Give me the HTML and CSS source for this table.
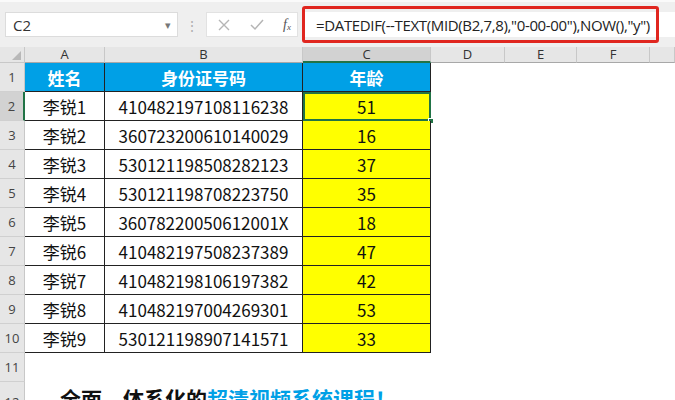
FILE: index.html
```html
<!DOCTYPE html>
<html lang="zh">
<head>
<meta charset="utf-8">
<link rel="stylesheet" href="styles.css">
</head>
<body>
<div class="toolbar">
  <div class="namebox"><span>C2</span><span class="caret">&#9662;</span></div>
  <div class="grip">&#8942;</div>
  <div class="btns">
    <svg width="14" height="14" viewBox="0 0 14 14"><path d="M2 2 L12 12 M12 2 L2 12" stroke="#b5b5b5" stroke-width="1.4" fill="none"/></svg>
    <svg width="16" height="14" viewBox="0 0 16 14"><path d="M2 7 L6 11 L14 2" stroke="#b5b5b5" stroke-width="1.5" fill="none"/></svg>
    <span class="fx">f<sub>x</sub></span>
  </div>
  <div class="field">
    <span class="formula">=DATEDIF(--TEXT(MID(B2,7,8),"0-00-00"),NOW(),"y")</span>
    <div class="annot"></div>
  </div>
</div>
<div class="sheet">
  <div class="corner"><span class="tri"></span></div>
  <div class="ch">A</div><div class="ch">B</div><div class="ch sel">C</div><div class="ch">D</div><div class="ch">E</div><div class="ch">F</div><div class="ch"></div>

  <div class="rh">1</div>
  <div class="c t head">姓名</div><div class="c t head">身份证号码</div><div class="c t head">年龄</div><div class="c"></div><div class="c"></div><div class="c"></div><div class="c"></div>

  <div class="rh sel">2</div>
  <div class="c t">李锐1</div><div class="c t">410482197108116238</div><div class="c t y active">51<span class="handle"></span></div><div class="c"></div><div class="c"></div><div class="c"></div><div class="c"></div>

  <div class="rh">3</div>
  <div class="c t">李锐2</div><div class="c t">360723200610140029</div><div class="c t y">16</div><div class="c"></div><div class="c"></div><div class="c"></div><div class="c"></div>

  <div class="rh">4</div>
  <div class="c t">李锐3</div><div class="c t">530121198508282123</div><div class="c t y">37</div><div class="c"></div><div class="c"></div><div class="c"></div><div class="c"></div>

  <div class="rh">5</div>
  <div class="c t">李锐4</div><div class="c t">530121198708223750</div><div class="c t y">35</div><div class="c"></div><div class="c"></div><div class="c"></div><div class="c"></div>

  <div class="rh">6</div>
  <div class="c t">李锐5</div><div class="c t">36078220050612001X</div><div class="c t y">18</div><div class="c"></div><div class="c"></div><div class="c"></div><div class="c"></div>

  <div class="rh">7</div>
  <div class="c t">李锐6</div><div class="c t">410482197508237389</div><div class="c t y">47</div><div class="c"></div><div class="c"></div><div class="c"></div><div class="c"></div>

  <div class="rh">8</div>
  <div class="c t">李锐7</div><div class="c t">410482198106197382</div><div class="c t y">42</div><div class="c"></div><div class="c"></div><div class="c"></div><div class="c"></div>

  <div class="rh">9</div>
  <div class="c t">李锐8</div><div class="c t">410482197004269301</div><div class="c t y">53</div><div class="c"></div><div class="c"></div><div class="c"></div><div class="c"></div>

  <div class="rh">10</div>
  <div class="c t">李锐9</div><div class="c t">530121198907141571</div><div class="c t y">33</div><div class="c"></div><div class="c"></div><div class="c"></div><div class="c"></div>

  <div class="rh">11</div>
  <div class="c"></div><div class="c"></div><div class="c"></div><div class="c"></div><div class="c"></div><div class="c"></div><div class="c"></div>

  <div class="rh">12</div>
  <div class="banner">全面、体系化的<span class="blue">超清视频系统课程！</span></div>
</div>
</body>
</html>
```
FILE: styles.css
```css
* { box-sizing: border-box; }
html, body { margin: 0; padding: 0; }
body {
  width: 675px;
  height: 400px;
  overflow: hidden;
  background: #fff;
  font-family: "Noto Sans CJK SC", "Noto Sans", sans-serif;
  color: #111;
}
.toolbar {
  height: 47px;
  background: #efefef;
  border-top: 2px solid #fafafa;
  display: flex;
  align-items: center;
  padding-left: 5px;
}
.namebox {
  width: 173px;
  height: 25px;
  background: #fff;
  border: 1px solid #dcdcdc;
  display: flex;
  align-items: center;
  justify-content: space-between;
  padding: 0 6px 0 7px;
  font-family: "Open Sans", "Noto Sans", sans-serif;
  font-size: 15px;
  color: #333;
}
.caret { font-size: 11px; color: #777; }
.grip {
  width: 28px;
  text-align: center;
  color: #b0b0b0;
  font-size: 14px;
}
.btns {
  width: 92px;
  height: 25px;
  background: #fff;
  border: 1px solid #e2e2e2;
  display: flex;
  align-items: center;
  justify-content: space-between;
  padding: 0 6px 0 10px;
}
.fx {
  font-family: "Liberation Serif", serif;
  font-style: italic;
  font-size: 14px;
  color: #555;
}
.fx sub { font-size: 9px; vertical-align: -1px; }
.field {
  flex: 1;
  height: 25px;
  margin-left: 5px;
  background: #fff;
  position: relative;
  display: flex;
  align-items: center;
  padding-left: 13px;
}
.formula {
  font-family: "Open Sans", "Noto Sans", sans-serif;
  font-size: 15px;
  color: #222;
  letter-spacing: -0.35px;
  white-space: nowrap;
}
.annot {
  position: absolute;
  left: -1px;
  top: -6px;
  width: 357px;
  height: 37px;
  border: 3px solid #e0261f;
  border-radius: 3px;
}
.sheet {
  display: grid;
  grid-template-columns: 25px 80px 198px 128px 74px 72px 73px 1fr;
  grid-template-rows: 16px repeat(11, 29px) 40px;
}
.corner {
  background: #e6e6e6;
  border-right: 1px solid #c8c8c8;
  border-bottom: 1px solid #c8c8c8;
  position: relative;
}
.tri {
  position: absolute;
  right: 3px;
  bottom: 2px;
  width: 0; height: 0;
  border-left: 9px solid transparent;
  border-bottom: 9px solid #b8b8b8;
}
.ch {
  background: #e6e6e6;
  border-right: 1px solid #c8c8c8;
  border-bottom: 1px solid #a8a8a8;
  font-family: "Open Sans", "Noto Sans", sans-serif;
  font-size: 13px;
  color: #333;
  display: flex;
  align-items: center;
  justify-content: center;
  line-height: 1;
}
.ch.sel { background: #d2d2d2; border-bottom: 2px solid #217346; }
.rh {
  background: #e6e6e6;
  border-right: 1px solid #c8c8c8;
  border-bottom: 1px solid #d0d0d0;
  font-family: "Open Sans", "Noto Sans", sans-serif;
  font-size: 13px;
  color: #444;
  display: flex;
  align-items: center;
  justify-content: center;
}
.rh.sel { background: #d2d2d2; border-right: 2px solid #217346; }
.c {
  display: flex;
  align-items: center;
  justify-content: center;
  font-size: 17px;
  color: #111;
  position: relative;
}
.c.t { border-right: 1px solid #222; border-bottom: 1px solid #222; }
.head {
  background: #00a0e6;
  color: #fff;
  font-weight: bold;
}
.y { background: #ffff00; }
.active { outline: 2px solid #217346; outline-offset: -2px; }
.handle {
  position: absolute;
  right: -4px;
  bottom: -4px;
  width: 6px;
  height: 6px;
  background: #217346;
  border: 1px solid #fff;
}
.banner {
  grid-column: 2 / -1;
  padding: 6px 0 0 35px;
  font-size: 21px;
  font-weight: bold;
  color: #111;
  white-space: nowrap;
  line-height: 1;
}
.blue { color: #00a0e6; }
```
